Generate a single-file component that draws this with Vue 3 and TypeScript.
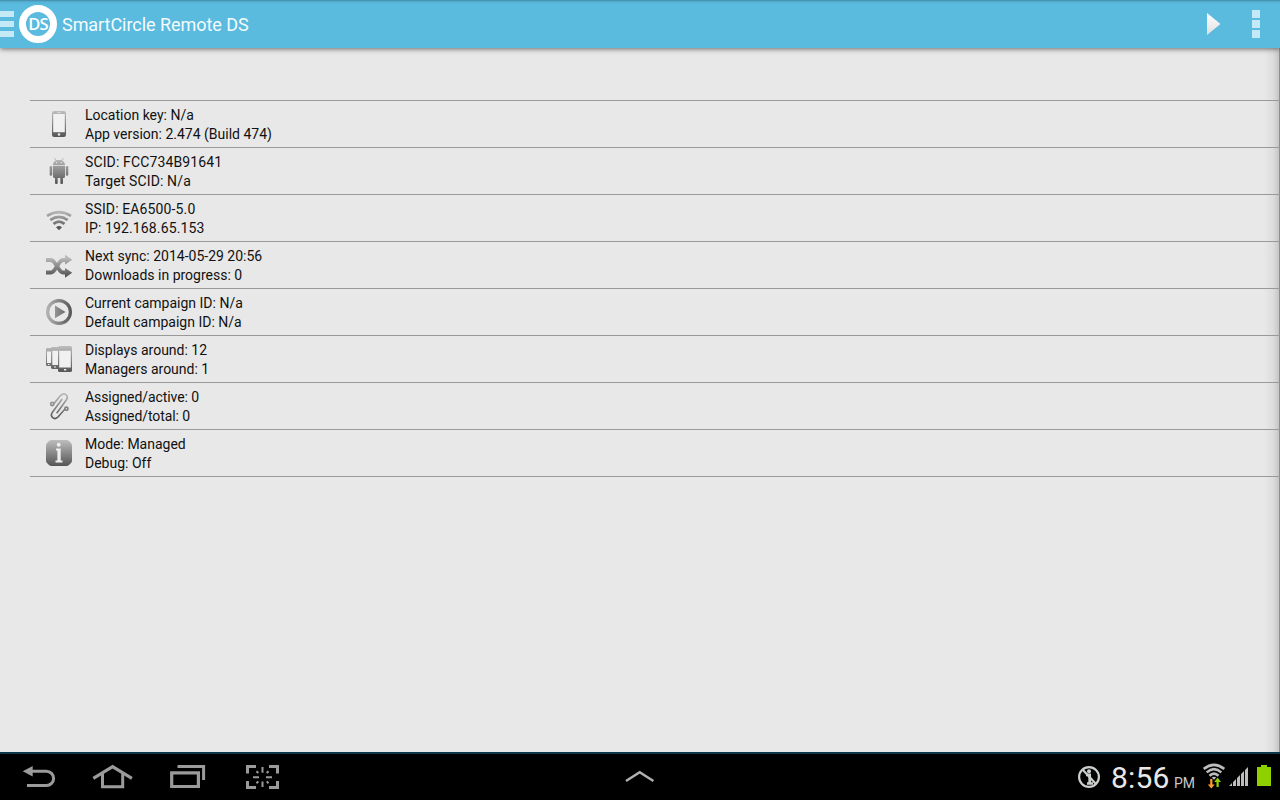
<script setup lang="ts">
interface InfoRow {
  icon: string
  lines: [string, string]
  tracking?: 'wide' | 'tight'
}

const rows: InfoRow[] = [
  { icon: 'phone', lines: ['Location key: N/a', 'App version: 2.474 (Build 474)'] },
  { icon: 'android', lines: ['SCID: FCC734B91641', 'Target SCID: N/a'], tracking: 'wide' },
  { icon: 'wifi', lines: ['SSID: EA6500-5.0', 'IP: 192.168.65.153'], tracking: 'wide' },
  { icon: 'sync', lines: ['Next sync: 2014-05-29 20:56', 'Downloads in progress: 0'] },
  { icon: 'play', lines: ['Current campaign ID: N/a', 'Default campaign ID: N/a'] },
  { icon: 'displays', lines: ['Displays around: 12', 'Managers around: 1'] },
  { icon: 'clip', lines: ['Assigned/active: 0', 'Assigned/total: 0'], tracking: 'tight' },
  { icon: 'info', lines: ['Mode: Managed', 'Debug: Off'] },
]
</script>

<template>
  <div class="screen">
    <header class="bar">
      <svg class="drawer" width="14" height="48" viewBox="0 0 14 48">
        <path d="M0 11h14v6H0zM0 21h14v6H0zM0 31h14v6H0z" fill="#c4e9f7" />
      </svg>
      <div class="logo"><span>DS</span></div>
      <h1>SmartCircle Remote DS</h1>
      <svg class="start" width="15" height="48" viewBox="0 0 15 48">
        <defs>
          <linearGradient id="startFill" x1="0" y1="0" x2="0" y2="1">
            <stop offset="0" stop-color="#fff" />
            <stop offset="1" stop-color="#dfdfdf" />
          </linearGradient>
        </defs>
        <path d="M1 13v22L14.500 24z" fill="url(#startFill)" />
      </svg>
      <svg class="more" width="8" height="48" viewBox="0 0 8 48">
        <path d="M0 10h8v8H0zM0 20h8v8H0zM0 30h8v8H0z" fill="#c4e9f7" />
      </svg>
    </header>

    <main class="content">
      <svg class="defs" width="0" height="0">
        <defs>
          <linearGradient id="grey" gradientUnits="userSpaceOnUse" x1="0" y1="10" x2="0" y2="36">
            <stop offset="0" stop-color="#bdbdbd" />
            <stop offset="1" stop-color="#555" />
          </linearGradient>
          <linearGradient id="greyShort" gradientUnits="userSpaceOnUse" x1="0" y1="16" x2="0" y2="34">
            <stop offset="0" stop-color="#b9b9b9" />
            <stop offset="1" stop-color="#555" />
          </linearGradient>
          <linearGradient id="greySide" gradientUnits="userSpaceOnUse" x1="2" y1="0" x2="28" y2="0">
            <stop offset="0" stop-color="#b5b5b5" />
            <stop offset="1" stop-color="#555" />
          </linearGradient>
        </defs>
      </svg>
      <ul class="list">
        <li v-for="row in rows" :key="row.icon" class="row">
          <svg class="icon" width="30" height="46" viewBox="0 0 30 46">
            <template v-if="row.icon === 'phone'">
              <rect x="8" y="10" width="14" height="26" rx="2.2" fill="url(#grey)" />
              <rect x="9.2" y="13" width="11.6" height="18.2" fill="#f1f1f1" />
              <rect x="13" y="11.3" width="4" height=".8" fill="#ddd" />
              <circle cx="15" cy="33.5" r="1.2" fill="#eee" />
            </template>
            <g v-else-if="row.icon === 'android'" fill="url(#grey)">
              <path d="M9 17c0-3 2.4-5 6-5s6 2 6 5zM9 17.700h12v10.800q0 1.500-1.500 1.500h-9q-1.500 0-1.500-1.500z" />
              <rect x="5.700" y="18" width="2.500" height="9.800" rx="1.200" />
              <rect x="21.800" y="18" width="2.500" height="9.800" rx="1.200" />
              <rect x="11" y="28" width="2.700" height="8" rx="1" />
              <rect x="16.300" y="28" width="2.700" height="8" rx="1" />
              <path d="M10.500 10l2 3M19.500 10l-2 3" stroke="#b0b0b0" stroke-width=".8" />
              <path d="M12 14.300h1.200v1H12zM16.800 14.300H18v1h-1.200z" fill="#eee" />
            </g>
            <g v-else-if="row.icon === 'wifi'" fill="none" stroke="url(#greyShort)" stroke-width="2.700">
              <path d="M3 20.800Q15 13.600 27 20.800" />
              <path d="M6.300 25Q15 18.800 23.700 25" />
              <path d="M9.500 28.900Q15 24.400 20.500 28.900" />
              <path d="M12 32.300q3-2.400 6 0L15 35.300z" fill="#555" stroke="none" />
            </g>
            <g v-else-if="row.icon === 'sync'">
              <path d="M2 30.500h4.500c2 0 3-1 4-2.500l5-7.500c1-1.500 2-2.500 4-2.500H22" fill="none" stroke="url(#greyShort)" stroke-width="3.800" />
              <path d="M2 18h4.500c2 0 3 1 4 2.500l5 7.500c1 1.500 2 2.500 4 2.500H22" fill="none" stroke="url(#greyShort)" stroke-width="3.800" />
              <path d="M21 12.800l7.300 5-7.300 4.700zM21 26l7.300 4.700-7.300 5z" fill="url(#greyShort)" />
            </g>
            <g v-else-if="row.icon === 'play'">
              <circle cx="15" cy="23" r="11.400" fill="none" stroke="url(#greySide)" stroke-width="3.200" />
              <path d="M11 16.500v12.800L21.500 23z" fill="url(#greySide)" />
            </g>
            <g v-else-if="row.icon === 'displays'">
              <rect x="2" y="12" width="8" height="18" rx="1.200" fill="url(#grey)" />
              <rect x="3" y="15.500" width="6" height="11.500" fill="#f1f1f1" />
              <rect x="7" y="11" width="10" height="22" rx="1.400" fill="url(#grey)" />
              <rect x="8.300" y="14.800" width="7" height="14.200" fill="#f1f1f1" />
              <rect x="14" y="10" width="14" height="26" rx="1.600" fill="url(#grey)" />
              <rect x="15.200" y="14.800" width="11.600" height="16.700" fill="#f1f1f1" />
              <path d="M4 28h1.500v1H4zM10 30.500h2v1h-2zM20 33h2.200v1.500H20z" fill="#eee" />
            </g>
            <g v-else-if="row.icon === 'clip'" fill="none" stroke="url(#grey)" stroke-width="1.600">
              <path d="M9.200 21.500L16.500 12.600c3.800-4.100 9 .2 5.600 4.600L12.700 30.300" />
              <path d="M21.200 25.700L14.200 33.800c-3.800 4-9-.2-5.600-4.700L18.200 16" />
              <circle cx="8.200" cy="21" r="1.600" />
              <circle cx="22.400" cy="25.700" r="1.600" />
            </g>
            <g v-else>
              <path d="M7.500 10h15q1.500 0 2.500 1l2 2q1 1 1 2.500v15q0 1.500-1 2.500L25 35q-1 1-2.500 1h-15Q6 36 5 35L3 33q-1-1-1-2.500v-15Q2 14 3 13l2-2q1-1 2.500-1z" fill="url(#grey)" />
              <circle cx="14.700" cy="14.700" r="2" fill="#eee" />
              <path d="M12 18.500h4.700V30.500h1.800v2h-7v-2h1.900v-10H12z" fill="#eee" />
            </g>
          </svg>
          <div class="text" :class="row.tracking">
            <p v-for="line in row.lines" :key="line">{{ line }}</p>
          </div>
        </li>
      </ul>
    </main>

    <footer class="nav">
      <svg class="buttons" width="300" height="46" viewBox="0 0 300 46" fill="none" stroke="#9b9b9b">
        <path d="M31 17.300H46.500a7 7 0 0 1 0 14.200H27" stroke-width="3" />
        <path d="M22.700 17.300l10-5.300v10.600z" fill="#9b9b9b" stroke="none" />
        <path d="M93.300 24.300L112.600 12.700L131.900 24.300" stroke-width="3.200" />
        <path d="M102.500 19.500V32.700H122.700V19.500" stroke-width="3" />
        <path d="M171.700 18.900H198.400V32.500H171.700z" stroke-width="3.200" />
        <path d="M177.500 12.500H203.600V26" stroke-width="3" />
        <path d="M247.500 19.500V12.500H256M269 12.500H277.500V19.500M277.500 27V33.500H269M256 33.500H247.500V27" stroke-width="3" />
        <path d="M262.500 13v5.700M262.500 27.500V33M253 23.200h6M266 23.200h6M256.500 17.200l1.800 1.800M268.500 17.200l-1.800 1.800M256.500 29.200l1.800-1.800M268.500 29.200l-1.800-1.800" stroke-width="2" />
      </svg>
      <svg class="caret" width="30" height="46" viewBox="0 0 30 46" fill="none">
        <path d="M1 27L14.700 18.200L28.400 27" stroke="#b0b0b0" stroke-width="2.400" />
      </svg>
      <div class="status">
        <svg width="24" height="46" viewBox="0 0 24 46" fill="none" stroke="#ccd0cd">
          <circle cx="12" cy="23" r="9.900" stroke-width="2.200" />
          <path d="M5.500 15.500L19 30" stroke-width="2.200" />
          <circle cx="12" cy="17.300" r="2" fill="#ccd0cd" stroke="none" />
          <path d="M9 20.800h3.700v9M10 29.500h6" stroke-width="2.700" />
        </svg>
        <div class="clock">8:56</div>
        <div class="pm">PM</div>
        <svg class="net" width="22" height="46" viewBox="0 0 22 46" fill="none">
          <g stroke="#bdbdbd" stroke-width="2.600">
            <path d="M.700 14.900Q11 6.900 21.300 14.900" />
            <path d="M3.700 18.400Q11 11.900 18.300 18.400" />
            <path d="M6.500 21.700Q11 17.400 15.500 21.700" />
            <path d="M8.800 23.600q2.200-1.800 4.400 0L11 25.800z" fill="#bdbdbd" stroke="none" />
          </g>
          <path d="M7.200 25h2.200v5.500h2.300l-3.400 4-3.500-4h2.400z" fill="#ff9c30" />
          <path d="M13.500 33h2.200v-5H18l-3.400-4.500-3.400 4.500h2.300z" fill="#8fd000" />
        </svg>
        <svg class="signal" width="20" height="46" viewBox="0 0 20 46">
          <path d="M0 32l3-3v3zM4 32v-4l3-3v7zM8 32v-8l3-3v11zM12 32V20l3-3v15zM16 32V16l3-3v19z" fill="#bdbdbd" />
        </svg>
        <svg class="battery" width="14" height="46" viewBox="0 0 14 46">
          <path d="M0 13h4v-2h6v2h4v19H0z" fill="#8fd000" />
        </svg>
      </div>
    </footer>
  </div>
</template>

<style>
body {
  margin: 0;
}
</style>

<style scoped>
.screen {
  width: 1280px;
  height: 800px;
  display: flex;
  flex-direction: column;
  overflow: hidden;
  background: #e8e8e8;
  font-family: Roboto, sans-serif;
}
.bar {
  height: 48px;
  flex: none;
  display: flex;
  align-items: center;
  background: linear-gradient(#3f8ba8 0, #4c9fbf 1px, #56b3d6 2px, #5abbdf 5px);
  box-shadow: 0 1px 5px rgba(0, 0, 0, 0.55);
  z-index: 1;
}
.logo {
  box-sizing: border-box;
  width: 38px;
  height: 38px;
  margin-left: 5px;
  border: 7px solid #fff;
  border-radius: 50%;
  display: flex;
  align-items: center;
  justify-content: center;
  color: #fff;
  font: 600 16.500px/24px "Open Sans", sans-serif;
  letter-spacing: -0.8px;
}
h1 {
  margin: 1px 0 0 5px;
  color: #f4fbfe;
  font-size: 18px;
  font-weight: 400;
  line-height: 24px;
  letter-spacing: -0.05px;
}
.start {
  margin-left: auto;
}
.more {
  margin: 0 20px 0 31px;
}
.content {
  flex: 1;
  box-sizing: border-box;
  padding: 52px 0 0 30px;
  background: linear-gradient(90deg, transparent 1264px, #ddd 1273px, #c5c5c5 1279px, #8e8e8e 1279px);
}
.defs {
  position: absolute;
}
.list {
  list-style: none;
  margin: 0;
  padding: 0;
  border-top: 1px solid #999;
}
.row {
  display: flex;
  height: 46px;
  border-bottom: 1px solid #999;
}
.icon {
  margin-left: 14px;
}
.text {
  margin-left: 11px;
  padding-top: 5px;
}
.wide {
  letter-spacing: 0.13px;
}
.tight {
  letter-spacing: -0.08px;
}
p {
  margin: 0;
  color: #111;
  font-size: 14px;
  line-height: 19px;
  white-space: nowrap;
}
.nav {
  height: 46px;
  flex: none;
  display: flex;
  border-top: 2px solid #0b3548;
  background: #000;
}
.caret {
  margin-left: 325px;
}
.status {
  display: flex;
  margin-left: 422px;
  color: #e8e8e8;
}
.clock {
  width: 63px;
  margin-left: 10px;
  font-size: 30px;
  line-height: 47px;
  letter-spacing: 0.2px;
}
.pm {
  width: 29px;
  font-size: 14px;
  line-height: 58px;
  color: #c8c8c8;
}
.signal {
  margin-left: 4px;
}
.battery {
  margin-left: 8px;
}
</style>
